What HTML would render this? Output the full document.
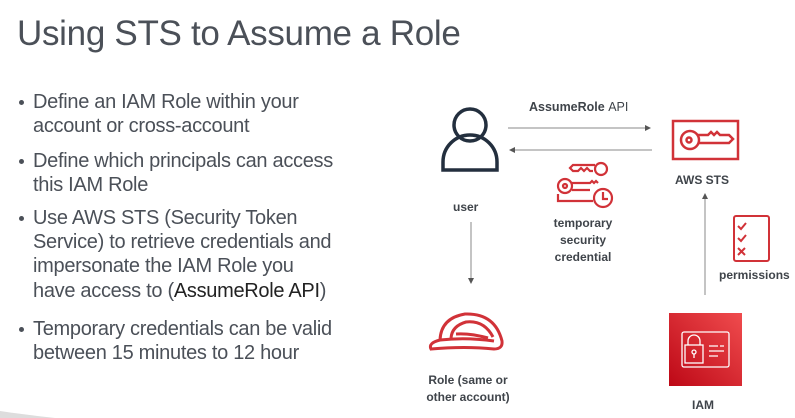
<!DOCTYPE html>
<html><head><meta charset="utf-8"><style>
body{margin:0;width:795px;height:418px;background:#fff;position:relative;overflow:hidden;font-family:"Liberation Sans",sans-serif;color:#4b5058}
.t{position:absolute;left:17px;top:14px;font-size:35px;white-space:nowrap;letter-spacing:-0.3px}
.l{position:absolute;left:33px;font-size:20px;white-space:nowrap;letter-spacing:-0.3px;line-height:24px}
.b{position:absolute;left:19px;width:5px;height:5px;border-radius:50%;background:#4b5058}
.d{position:absolute;font-size:12px;font-weight:bold;color:#3f444a;text-align:center;line-height:17px;white-space:nowrap}
</style></head><body>
<div class="t">Using STS to Assume a Role</div>
<div class="b" style="top:100px"></div>
<div class="l" style="top:90px">Define an IAM Role within your</div>
<div class="l" style="top:114px">account or cross-account</div>
<div class="b" style="top:159px"></div>
<div class="l" style="top:149px">Define which principals can access</div>
<div class="l" style="top:173px">this IAM Role</div>
<div class="b" style="top:216px"></div>
<div class="l" style="top:206px">Use AWS STS (Security Token</div>
<div class="l" style="top:230px">Service) to retrieve credentials and</div>
<div class="l" style="top:254px">impersonate the IAM Role you</div>
<div class="l" style="top:279px">have access to (<span style="color:#222">AssumeRole API</span>)</div>
<div class="b" style="top:327px"></div>
<div class="l" style="top:317px">Temporary credentials can be valid</div>
<div class="l" style="top:341px">between 15 minutes to 12 hour</div>
<svg style="position:absolute;left:0;top:405px" width="60" height="13"><path d="M0 13 L0 6 Q20 9 55 13Z" fill="#ddd"/></svg>

<svg style="position:absolute;left:0;top:0" width="795" height="418" fill="none">
<defs><marker id="a" markerWidth="6" markerHeight="6" refX="5" refY="3" orient="auto"><path d="M0 0L6 3L0 6Z" fill="#555"/></marker></defs>
<g stroke="#888" stroke-width="1">
<line x1="508" y1="128" x2="650" y2="128" marker-end="url(#a)"/>
<line x1="652" y1="150" x2="510" y2="150" marker-end="url(#a)"/>
<line x1="471" y1="222" x2="471" y2="283" marker-end="url(#a)"/>
<line x1="705" y1="295" x2="705" y2="194" marker-end="url(#a)"/>
</g>
<g stroke="#232f3e" stroke-width="3.5">
<circle cx="470" cy="125" r="16"/>
<path d="M443 170 V162 A27 27 0 0 1 497 162 V170 Z"/>
</g>
<g stroke="#d13238" stroke-width="2.5">
<rect x="673" y="121" width="65" height="38"/>
<circle cx="690" cy="140" r="9"/><circle cx="689" cy="140" r="2.5"/>
<path d="M698 135 H708 l3 -3 3 3 3 -3 3 3 H729 l4 4 -4 4 H698"/>
</g>
<g stroke="#d13238" stroke-width="2.2">
<circle cx="601" cy="169" r="6"/>
<path d="M595 165 H573 l-3 3 3 3 h5 l3 -3 3 3 3-3 3 3 h3"/>
<circle cx="565" cy="186" r="7"/><circle cx="565" cy="186" r="2"/>
<path d="M572 183 H590 l2-2 2 2 2-2 2 2 M572 190 H590"/>
<path d="M558 194 V201 H593"/>
<circle cx="603" cy="198" r="9"/><path d="M603 192 V199 H608"/>
</g>
<g stroke="#d13238" stroke-width="2">
<rect x="734" y="216" width="35" height="45" rx="2"/>
<path d="M738 226 l3 3 5-6 M738 238 l3 3 5-6 M738 248 l7 7 M745 248 l-7 7"/>
</g>
<g stroke="#d13238" stroke-width="3">
<path d="M431 349 Q428 343 440 340 Q441 318 465 314 Q495 313 502 341 Q503 349 494 349 Q465 346 431 349Z"/>
<path d="M440 340 Q466 337 494 341"/>
<path d="M451 338 Q452 326 466 322 Q484 320 493 337"/>
<path d="M456 334 Q470 333 488 338"/>
</g>
<defs><linearGradient id="g" x1="0" y1="1" x2="1" y2="0"><stop offset="0" stop-color="#bd0816"/><stop offset="1" stop-color="#f04c4e"/></linearGradient></defs>
<rect x="669" y="313" width="73" height="73" fill="url(#g)"/>
<g stroke="#fff" stroke-width="1.3">
<rect x="682" y="332" width="47" height="35" rx="2"/>
<rect x="685" y="345" width="18" height="18"/>
<path d="M688 345 V341 A6 6 0 0 1 700 341 V345"/>
<circle cx="694" cy="352" r="2"/><path d="M694 354 V358 M709 346 H718 M720 346 H724 M709 351 H724 M709 356 H718"/>
</g>
</svg>
<div class="d" style="left:529px;top:99px;font-size:12.5px">AssumeRole <span style="font-weight:normal">API</span></div>
<div class="d" style="left:675px;top:172px">AWS STS</div>
<div class="d" style="left:453px;top:199px">user</div>
<div class="d" style="left:543px;top:215px;width:80px">temporary<br>security<br>credential</div>
<div class="d" style="left:719px;top:267px">permissions</div>
<div class="d" style="left:418px;top:372px;width:100px">Role (same or<br>other account)</div>
<div class="d" style="left:692px;top:397px">IAM</div>
</body></html>
